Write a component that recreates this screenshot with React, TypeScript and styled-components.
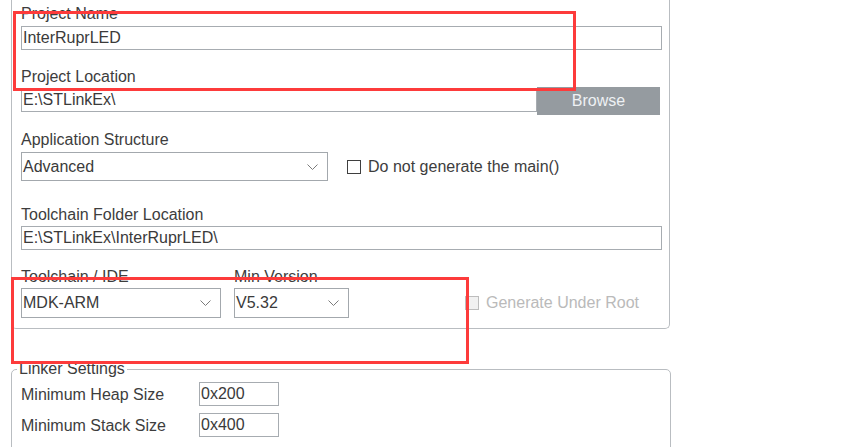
import React from 'react';
import styled, { createGlobalStyle } from 'styled-components';

const Global = createGlobalStyle`
  html, body { margin: 0; padding: 0; background: #ffffff; }
  body {
    font-family: "Liberation Sans", Arial, sans-serif;
    font-size: 16px;
    color: #3d3d3d;
  }
  * { box-sizing: border-box; }
`;

const Page = styled.div`
  position: relative;
  width: 847px;
  height: 447px;
  overflow: hidden;
  padding-left: 11px;
`;

const ProjectGroup = styled.section`
  width: 659px;
  border: 1px solid #b9bdc1;
  border-top: none;
  border-radius: 0 0 5px 5px;
  padding: 3px 7px 10px 9px;
  display: flex;
  flex-direction: column;
`;

const Field = styled.div<{ $top?: number; $width?: number; $left?: number }>`
  display: flex;
  flex-direction: column;
  margin-top: ${(p) => p.$top ?? 0}px;
  margin-left: ${(p) => p.$left ?? 0}px;
  ${(p) => (p.$width ? `width: ${p.$width}px;` : '')}
`;

const Label = styled.label<{ $gap?: number }>`
  display: block;
  height: 20px;
  padding-top: 2px;
  line-height: 18px;
  white-space: nowrap;
  color: #3d3d3d;
  margin-bottom: ${(p) => p.$gap ?? 2}px;
`;

const TextBox = styled.input<{ $width?: number; $height?: number }>`
  font: inherit;
  color: #3a3a3a;
  width: ${(p) => (p.$width ? `${p.$width}px` : '100%')};
  height: ${(p) => p.$height ?? 24}px;
  border: 1px solid #a7acb1;
  background: #fff;
  padding: 0 1px;
  margin: 0;
  outline: none;
  border-radius: 0;
`;

const BrowseRow = styled.div`
  display: flex;
  align-items: flex-start;
  & > input { margin-top: 1px; }
`;

const BrowseButton = styled.button`
  font: inherit;
  width: 123px;
  height: 28px;
  margin: 0;
  border: none;
  background: #959ba0;
  color: #eef1f4;
  padding: 0;
  cursor: default;
`;

const InlineRow = styled.div`
  display: flex;
  align-items: center;
`;

const SelectBox = styled.div<{ $width: number; $height: number }>`
  width: ${(p) => p.$width}px;
  height: ${(p) => p.$height}px;
  border: 1px solid #a3a8ad;
  background: #fff;
  color: #3a3a3a;
  display: flex;
  align-items: center;
  justify-content: space-between;
  padding: 0 9px 0 1px;
`;

const CheckWrap = styled.label<{ $left: number; $disabled?: boolean; $height?: number }>`
  display: flex;
  align-items: center;
  margin-left: ${(p) => p.$left}px;
  ${(p) => (p.$height ? `height: ${p.$height}px;` : '')}
  color: ${(p) => (p.$disabled ? '#bababa' : '#3d3d3d')};
  white-space: nowrap;
`;

const CheckSquare = styled.span<{ $disabled?: boolean }>`
  width: 14px;
  height: 14px;
  border: 1px solid ${(p) => (p.$disabled ? '#bdbdbd' : '#3f3f3f')};
  background: ${(p) => (p.$disabled ? '#f1f1f1' : '#ffffff')};
  margin-right: 7px;
  flex: none;
`;

const ToolchainRow = styled.div`
  display: flex;
  align-items: flex-end;
  margin-top: 16px;
`;

const LinkerGroup = styled.fieldset`
  width: 660px;
  margin: 31px 0 0 0;
  border: 1px solid #b9bdc1;
  border-radius: 5px;
  padding: 4px 0 20px 9px;
  min-width: 0;
`;

const Legend = styled.legend`
  line-height: 18px;
  padding: 0 2px;
  margin-left: -4px;
  color: #3d3d3d;
`;

const LinkerRow = styled.div<{ $top?: number }>`
  display: flex;
  align-items: center;
  margin-top: ${(p) => p.$top ?? 0}px;
`;

const LinkerLabel = styled.span`
  width: 178px;
  padding-top: 1px;
  color: #3d3d3d;
`;

const Annotation = styled.div<{ $x: number; $y: number; $w: number; $h: number }>`
  position: absolute;
  left: ${(p) => p.$x}px;
  top: ${(p) => p.$y}px;
  width: ${(p) => p.$w}px;
  height: ${(p) => p.$h}px;
  border: 3px solid #fd3b3b;
  pointer-events: none;
`;

const Chevron = () => (
  <svg width="11" height="6" viewBox="0 0 11 6" fill="none">
    <polyline points="0.5,0.5 5.5,5.5 10.5,0.5" stroke="#7b7b7b" strokeWidth="1" />
  </svg>
);

const Select = ({ value, width, height }: { value: string; width: number; height: number }) => (
  <SelectBox $width={width} $height={height}>
    <span>{value}</span>
    <Chevron />
  </SelectBox>
);

const Checkbox = ({
  text,
  left,
  disabled,
  height,
}: {
  text: string;
  left: number;
  disabled?: boolean;
  height?: number;
}) => (
  <CheckWrap $left={left} $disabled={disabled} $height={height}>
    <CheckSquare $disabled={disabled} />
    <span>{text}</span>
  </CheckWrap>
);

export default function App() {
  return (
    <>
      <Global />
      <Page>
        <ProjectGroup>
          <Field>
            <Label $gap={3}>Project Name</Label>
            <TextBox readOnly defaultValue="InterRuprLED" />
          </Field>
          <Field $top={16}>
            <Label $gap={1}>Project Location</Label>
            <BrowseRow>
              <TextBox readOnly defaultValue="E:\STLinkEx\" $width={516} />
              <BrowseButton>Browse</BrowseButton>
            </BrowseRow>
          </Field>
          <Field $top={14}>
            <Label $gap={3}>Application Structure</Label>
            <InlineRow>
              <Select value="Advanced" width={307} height={29} />
              <Checkbox text="Do not generate the main()" left={19} />
            </InlineRow>
          </Field>
          <Field $top={23}>
            <Label $gap={2}>Toolchain Folder Location</Label>
            <TextBox readOnly defaultValue="E:\STLinkEx\InterRuprLED\" />
          </Field>
          <ToolchainRow>
            <Field $width={200}>
              <Label $gap={2}>Toolchain / IDE</Label>
              <Select value="MDK-ARM" width={200} height={30} />
            </Field>
            <Field $width={115} $left={13}>
              <Label $gap={2}>Min Version</Label>
              <Select value="V5.32" width={115} height={30} />
            </Field>
            <Checkbox text="Generate Under Root" left={116} disabled height={30} />
          </ToolchainRow>
        </ProjectGroup>

        <LinkerGroup>
          <Legend>Linker Settings</Legend>
          <LinkerRow>
            <LinkerLabel>Minimum Heap Size</LinkerLabel>
            <TextBox readOnly defaultValue="0x200" $width={80} />
          </LinkerRow>
          <LinkerRow $top={7}>
            <LinkerLabel>Minimum Stack Size</LinkerLabel>
            <TextBox readOnly defaultValue="0x400" $width={80} />
          </LinkerRow>
        </LinkerGroup>

        <Annotation $x={13} $y={11} $w={563} $h={80} />
        <Annotation $x={11} $y={277} $w={458} $h={87} />
      </Page>
    </>
  );
}
